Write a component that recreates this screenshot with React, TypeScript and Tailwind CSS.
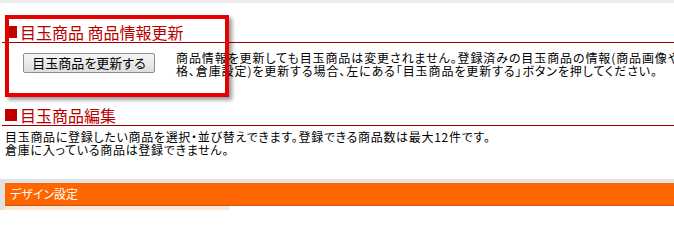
import React from 'react';

const jp = "font-['Noto_Sans_CJK_JP','Noto_Sans',sans-serif]";

function Heading({ label }: { label: string }) {
  return (
    <div className="ml-[2px] flex h-[21px] items-center border-b border-[#a00000] pl-[3px]">
      <span className="mr-[3px] inline-block h-[12px] w-[12px] bg-[#c00000]" />
      <span className="text-[16px] leading-[20px] text-[#b80000] [font-feature-settings:'palt']">{label}</span>
    </div>
  );
}

export default function App() {
  return (
    <div className={`relative h-[210px] w-[674px] overflow-hidden bg-white text-black ${jp}`}>
      <div className="h-[3px] bg-[#eeeeee]" />

      {/* 商品情報更新 */}
      <div className="mt-[19px]">
        <Heading label="目玉商品 商品情報更新" />
        <div className="mt-[10px] flex items-start">
          <button className="ml-[23px] h-[20px] w-[132px] shrink-0 rounded-[2px] border border-[#8e8e8e] bg-gradient-to-b from-[#f6f6f6] to-[#dedede] text-[13px] leading-[18px] [font-feature-settings:'palt']">
            目玉商品を更新する
          </button>
          <p className="-mt-[1px] ml-[21px] whitespace-nowrap text-[12px] leading-[12.5px] tracking-[0.9px] [font-feature-settings:'palt']">
            商品情報を更新しても目玉商品は変更されません。登録済みの目玉商品の情報(商品画像や価
            <br />
            格、倉庫設定)を更新する場合、左にある「目玉商品を更新する」ボタンを押してください。
          </p>
        </div>
      </div>

      {/* 目玉商品編集 */}
      <div className="mt-[28px]">
        <Heading label="目玉商品編集" />
        <p className="mt-[5px] pl-[5px] text-[12px] leading-[12.5px] tracking-[0.7px] [font-feature-settings:'palt']">
          目玉商品に登録したい商品を選択・並び替えできます。登録できる商品数は最大12件です。
          <br />
          倉庫に入っている商品は登録できません。
        </p>
      </div>

      {/* デザイン設定 */}
      <div className="mt-[23px] bg-[#e2e2e2] pl-[5px] pt-[4px]">
        <div className="flex h-[23px] items-center border-b border-[#c9591a] bg-[#ff6600] pl-[5px] text-[12px] text-white [font-feature-settings:'palt']">
          デザイン設定
        </div>
        <div className="flex h-[10px]">
          <div className="w-[224px] bg-[#fde9d3]" />
          <div className="flex-1 bg-white" />
        </div>
      </div>

      {/* annotation box */}
      <div className="pointer-events-none absolute left-[5px] top-[15px] h-[82px] w-[224px] border-[4px] border-[#e60000] shadow-[3px_3px_4px_rgba(0,0,0,0.4)]" />
    </div>
  );
}
